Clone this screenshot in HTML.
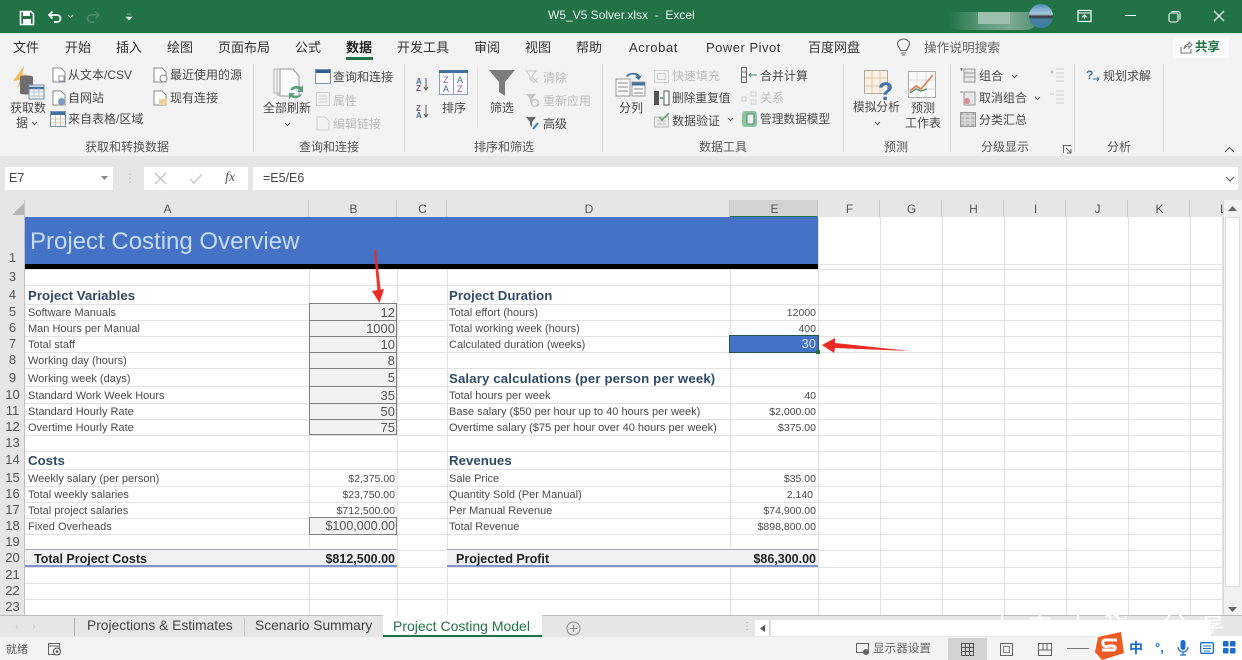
<!DOCTYPE html>
<html><head><meta charset="utf-8"><style>
*{box-sizing:border-box}
html,body{margin:0;padding:0}
body{width:1242px;height:660px;overflow:hidden;position:relative;background:#fff;font-family:"Liberation Sans","Noto Sans CJK SC",sans-serif;color:#444}
.a{position:absolute}
.t{position:absolute;white-space:nowrap;line-height:16px;height:16px}
.rb{font-size:12px;color:#4a4a4a}
.dis{color:#bdbdbd}
.tab{font-size:13px;color:#333;top:40px;line-height:16px}
.gl{font-size:12px;color:#555;top:139px}
.sep{position:absolute;top:64px;width:1px;height:88px;background:#d2d2d2}
.ic{position:absolute}
.h{position:absolute;top:200px;height:17px;font-size:12px;line-height:18px;text-align:center;color:#555;border-right:1px solid #c8c8c8;padding-left:2px}
.r{position:absolute;left:0;width:25px;font-size:13px;line-height:16px;text-align:center;color:#555}
.c{position:absolute;font-size:11px;line-height:16px;color:#4a4a4a;white-space:nowrap;margin-top:1px}
.n{text-align:right;font-size:10.5px}
.hd{font-weight:bold;font-size:13.2px;color:#2f4a68;letter-spacing:.05px}
.in{position:absolute;left:309px;width:88px;background:#f2f2f2;border:1px solid #7f7f7f;font-size:13px;text-align:right;padding-right:1px;color:#555}
.v{position:absolute;top:217px;height:398px;width:1px;background:#e2e2e2}
.ho{position:absolute;left:25px;width:1197px;height:1px;background:#e2e2e2}
.tb{left:0;font-size:13.8px;line-height:18px;height:18px;top:617px;color:#444}
</style></head><body>

<!-- title bar -->
<div class="a" style="left:0;top:0;width:1242px;height:33px;background:#217346"></div>
<svg class="ic" style="left:19px;top:10px" width="16" height="16" viewBox="0 0 16 16"><path d="M1.500 1.500H12L14.500 4V14.500H1.500Z" fill="none" stroke="#fff" stroke-width="1.600"/><rect x="4" y="2" width="7" height="4" fill="#fff"/><rect x="4" y="9" width="8" height="5" fill="#fff"/></svg>
<svg class="ic" style="left:47px;top:9px" width="16" height="16" viewBox="0 0 16 16"><path d="M2.500 6H10A3.500 3.500 0 0 1 10 13H7M5.500 2.500L2 6l3.500 3.500" fill="none" stroke="#fff" stroke-width="1.700"/></svg>
<svg class="ic" style="left:67px;top:14px" width="7" height="5"><path d="M1 1l2.500 2.500L6 1" fill="none" stroke="#cfe3d8" stroke-width="1"/></svg>
<svg class="ic" style="left:85px;top:9px" width="16" height="16" viewBox="0 0 16 16"><path d="M13 6H6A3.500 3.500 0 0 0 6 13H9M10.500 2.500L14 6l-3.500 3.500" fill="none" stroke="#4d8f6c" stroke-width="1.500"/></svg>
<svg class="ic" style="left:125px;top:13px" width="8" height="8"><path d="M2 1h4M1 4h6L4 7z" fill="#e4efe9" stroke="#e4efe9" stroke-width=".6"/></svg>
<div class="t" style="left:548px;top:7px;font-size:12px;color:#f0f6f2">W5_V5 Solver.xlsx&nbsp; -&nbsp; Excel</div>
<div class="a" style="left:948px;top:12px;width:90px;height:18px;background:linear-gradient(90deg,#217346,#5e9c7c 40%,#7ba992 70%,#4f9070);border-radius:0 0 12px 12px"></div>
<div class="a" style="left:978px;top:12px;width:32px;height:12px;background:#9dbfad"></div>
<div class="a" style="left:1029px;top:4px;width:24px;height:24px;border-radius:50%;background:linear-gradient(180deg,#4d8fc0 0,#a9c9d8 42%,#333 52%,#4a7f9e 64%,#3a7fa8 100%)"></div>
<svg class="ic" style="left:1077px;top:9px" width="15" height="14" viewBox="0 0 15 14"><rect x="1" y="1.500" width="13" height="11" fill="none" stroke="#fff" stroke-width="1.200"/><path d="M1 4h13M5 8.500l2.500-2.500 2.500 2.500M7.500 6v4" fill="none" stroke="#fff" stroke-width="1"/></svg>
<div class="a" style="left:1125px;top:15px;width:11px;height:1px;background:#fff"></div>
<svg class="ic" style="left:1168px;top:10px" width="13" height="13"><rect x="1" y="3" width="9" height="9" rx="2" fill="none" stroke="#fff" stroke-width="1.100"/><path d="M3.500 1.500H9.500Q12 1.500 12 4V9.500" fill="none" stroke="#fff" stroke-width="1.100"/></svg>
<svg class="ic" style="left:1213px;top:10px" width="12" height="12"><path d="M1 1l10 10M11 1L1 11" stroke="#fff" stroke-width="1.200"/></svg>

<!-- ribbon -->
<div class="a" style="left:0;top:33px;width:1242px;height:123px;background:#f3f3f3"></div>
<div class="a" style="left:0;top:156px;width:1242px;height:44px;background:#e6e6e6"></div>
<div class="a" style="left:0;top:33px;width:1242px;height:2px;background:#e9f3ee"></div>

<div class="t tab" style="left:13px">文件</div>
<div class="t tab" style="left:65px">开始</div>
<div class="t tab" style="left:116px">插入</div>
<div class="t tab" style="left:167px">绘图</div>
<div class="t tab" style="left:218px">页面布局</div>
<div class="t tab" style="left:295px">公式</div>
<div class="t tab" style="left:346px;font-weight:bold;color:#222">数据</div>
<div class="a" style="left:346px;top:57px;width:27px;height:3px;background:#217346"></div>
<div class="t tab" style="left:397px">开发工具</div>
<div class="t tab" style="left:474px">审阅</div>
<div class="t tab" style="left:525px">视图</div>
<div class="t tab" style="left:576px">帮助</div>
<div class="t tab" style="left:629px;letter-spacing:.6px">Acrobat</div>
<div class="t tab" style="left:706px;letter-spacing:.5px">Power Pivot</div>
<div class="t tab" style="left:808px">百度网盘</div>
<svg class="ic" style="left:896px;top:38px" width="15" height="18" viewBox="0 0 15 18"><path d="M4.500 12.500C4 10 1.500 8.500 1.500 6A6 5 0 0 1 13.500 6C13.500 8.500 11 10 10.500 12.500ZM5 15h5M6 17h3" fill="none" stroke="#666" stroke-width="1.100"/></svg>
<div class="t tab" style="left:924px;color:#666;font-size:12.700px">操作说明搜索</div>
<div class="a" style="left:1173px;top:37px;width:56px;height:21px;background:#fafafa"></div>
<svg class="ic" style="left:1180px;top:41px" width="13" height="13"><path d="M1 6v6h10V8M4 8c0-3 3-5 5-5V1l3 3-3 3V5C7 5 5 6 4 8Z" fill="none" stroke="#777" stroke-width="1"/></svg>
<div class="t" style="left:1195px;top:39px;font-size:12.500px;font-weight:bold;color:#217346">共享</div>

<!-- group 1 -->
<svg class="ic" style="left:12px;top:66px" width="34" height="34" viewBox="0 0 34 34"><path d="M12 0L1 15l7-1-3 9 10-15-5 1z" fill="#f0b95a"/><path d="M8 11c0-2 13-2 13 0V27c0 2-13 2-13 0z" fill="#6d6d6d"/><rect x="17" y="19" width="15" height="14" fill="#f5f5f5" stroke="#6f8aa8"/><path d="M17 22h15" stroke="#41719c" stroke-width="2.500"/><path d="M22 22v11M27 22v11M17 26h15M17 30h15" stroke="#a5b5c5" stroke-width=".7"/></svg>
<div class="t rb" style="left:10px;top:100px">获取数</div>
<div class="t rb" style="left:16px;top:115px">据</div>
<svg class="ic" style="left:31px;top:121px" width="7" height="5"><path d="M1 1l2.500 2.500L6 1" fill="none" stroke="#555"/></svg>
<svg class="ic" style="left:52px;top:67px" width="14" height="16"><path d="M1 1h8l4 4v10H1z" fill="#fff" stroke="#888"/><rect x="7" y="9" width="5" height="5" fill="none" stroke="#99a"/></svg>
<div class="t rb" style="left:68px;top:67px">从文本/CSV</div>
<svg class="ic" style="left:52px;top:90px" width="14" height="16"><path d="M1 1h8l4 4v10H1z" fill="#fff" stroke="#888"/><circle cx="9.500" cy="11.500" r="3.500" fill="#7f9cc0"/></svg>
<div class="t rb" style="left:68px;top:90px">自网站</div>
<svg class="ic" style="left:50px;top:111px" width="16" height="16"><rect x=".5" y=".5" width="15" height="15" fill="#f8f8f8" stroke="#7c93ac"/><path d="M1 2.500h14" stroke="#41719c" stroke-width="3"/><path d="M5.500 4v11M10.500 4v11M1 8h14M1 12h14" stroke="#c9a97a" stroke-width=".6"/></svg>
<div class="t rb" style="left:68px;top:111px">来自表格/区域</div>
<svg class="ic" style="left:153px;top:67px" width="15" height="16"><path d="M1 1h8l4 4v10H1z" fill="#fff" stroke="#888"/><circle cx="10.500" cy="11.500" r="3.500" fill="#fff" stroke="#888"/></svg>
<div class="t rb" style="left:170px;top:67px">最近使用的源</div>
<svg class="ic" style="left:153px;top:90px" width="15" height="16"><path d="M1 1h8l4 4v10H1z" fill="#fff" stroke="#888"/><rect x="6" y="9" width="8" height="6" fill="#eccf9e"/></svg>
<div class="t rb" style="left:170px;top:90px">现有连接</div>
<div class="t gl" style="left:85px">获取和转换数据</div>
<div class="sep" style="left:253px"></div>

<!-- group 2 -->
<svg class="ic" style="left:273px;top:68px" width="32" height="32" viewBox="0 0 32 32"><path d="M1 1h8v24H1zM4 1h8v26H4z" fill="#f5f5f5" stroke="#b5b5b5"/><path d="M7 1h13l6 7v20H7z" fill="#fbfbfb" stroke="#999"/><path d="M17 22a7 6 0 0 1 11-3l2-2v7h-6l2-2a4 4 0 0 0-6 0zM29 26a7 6 0 0 1-11 3l-2 2v-6h6l-2 2a4 4 0 0 0 6 0z" fill="#5aa27c"/></svg>
<div class="t rb" style="left:263px;top:100px">全部刷新</div>
<svg class="ic" style="left:284px;top:122px" width="7" height="5"><path d="M1 1l2.500 2.500L6 1" fill="none" stroke="#555"/></svg>
<svg class="ic" style="left:315px;top:69px" width="16" height="15"><rect x=".5" y=".5" width="15" height="14" fill="#fafafa" stroke="#7c93ac"/><path d="M1 2.500h14" stroke="#2f5e97" stroke-width="3"/></svg>
<div class="t rb" style="left:333px;top:69px">查询和连接</div>
<svg class="ic" style="left:316px;top:92px" width="15" height="15"><rect x=".5" y=".5" width="13" height="13" fill="none" stroke="#ccc"/><path d="M3 4h8M3 7h8M3 10h8" stroke="#ccc"/></svg>
<div class="t rb dis" style="left:333px;top:93px">属性</div>
<svg class="ic" style="left:316px;top:116px" width="15" height="16"><path d="M1 1h8l4 4v9H1z" fill="none" stroke="#ccc"/></svg>
<div class="t rb dis" style="left:333px;top:116px">编辑链接</div>
<div class="t gl" style="left:299px">查询和连接</div>
<div class="sep" style="left:404px"></div>

<!-- group 3 -->
<svg class="ic" style="left:416px;top:76px" width="15" height="42" viewBox="0 0 15 42"><text x="0" y="8" font-size="8" font-weight="bold" fill="#41719c" font-family="Liberation Sans">A</text><text x="0" y="15" font-size="8" font-weight="bold" fill="#7b5a8c" font-family="Liberation Sans">Z</text><path d="M10 2v12M8 11l2 3 2-3" stroke="#555" fill="none"/><text x="0" y="35" font-size="8" font-weight="bold" fill="#7b5a8c" font-family="Liberation Sans">Z</text><text x="0" y="42" font-size="8" font-weight="bold" fill="#41719c" font-family="Liberation Sans">A</text><path d="M10 29v12M8 38l2 3 2-3" stroke="#555" fill="none"/></svg>
<svg class="ic" style="left:439px;top:70px" width="29" height="25" viewBox="0 0 29 25"><rect x=".5" y=".5" width="28" height="24" fill="#fbfbfb" stroke="#8ba0b8"/><path d="M0 1.500h29" stroke="#41719c" stroke-width="3"/><path d="M14.500 3v22" stroke="#8ba0b8"/><text x="4" y="13" font-size="9" fill="#a05a9c" font-family="Liberation Sans">Z</text><text x="4" y="22" font-size="9" fill="#41719c" font-family="Liberation Sans">A</text><text x="18" y="13" font-size="9" fill="#41719c" font-family="Liberation Sans">A</text><text x="18" y="22" font-size="9" fill="#a05a9c" font-family="Liberation Sans">Z</text></svg>
<div class="t rb" style="left:442px;top:100px">排序</div>
<div class="a" style="left:477px;top:68px;width:1px;height:60px;background:#e4e4e4"></div>
<svg class="ic" style="left:488px;top:69px" width="28" height="28"><path d="M1 1h26L17 13v14l-6-4V13z" fill="#7c7c7c"/></svg>
<div class="t rb" style="left:490px;top:100px">筛选</div>
<svg class="ic" style="left:525px;top:70px" width="15" height="15"><path d="M1 1h10L7 6v5L5 9V6zM8 8l5 5M13 8l-5 5" fill="none" stroke="#c5c5c5"/></svg>
<div class="t rb dis" style="left:543px;top:70px">清除</div>
<svg class="ic" style="left:525px;top:93px" width="15" height="15"><path d="M1 1h10L7 6v5L5 9V6z" fill="#c5c5c5"/><circle cx="10" cy="10" r="3.500" fill="none" stroke="#c5c5c5" stroke-width="1.500"/></svg>
<div class="t rb dis" style="left:543px;top:93px">重新应用</div>
<svg class="ic" style="left:525px;top:116px" width="15" height="15"><path d="M1 1h10L7 6v5L5 9V6z" fill="#666"/><path d="M8 13l5-6" stroke="#2f7fc4" stroke-width="2"/></svg>
<div class="t rb" style="left:543px;top:116px">高级</div>
<div class="t gl" style="left:474px">排序和筛选</div>
<div class="sep" style="left:602px"></div>

<!-- group 4 -->
<svg class="ic" style="left:615px;top:69px" width="31" height="29" viewBox="0 0 31 29"><path d="M11 7A8 6 0 0 1 25 7l2-1-3 5-4-3 2-.5A5 4 0 0 0 13 8z" fill="#3f6f9f"/><rect x="1" y="10" width="14" height="17" fill="#fafafa" stroke="#999"/><path d="M3 14h10M3 18h10M3 22h10" stroke="#888"/><rect x="17" y="13" width="13" height="14" fill="#fafafa" stroke="#999"/><path d="M17 15h13" stroke="#41719c" stroke-width="3"/><path d="M19 20h9M19 24h9" stroke="#888"/></svg>
<div class="t rb" style="left:619px;top:100px">分列</div>
<svg class="ic" style="left:654px;top:69px" width="16" height="15"><rect x=".5" y="1.500" width="14" height="12" fill="none" stroke="#d0d0d0"/><rect x="3.500" y="4.500" width="8" height="6" fill="none" stroke="#d0d0d0"/></svg>
<div class="t rb dis" style="left:672px;top:68px">快速填充</div>
<svg class="ic" style="left:653px;top:90px" width="17" height="16"><rect x="1" y="1" width="5" height="14" fill="#555"/><path d="M7 8h3" stroke="#4a8a68" stroke-width="1.500"/><rect x="11" y="1" width="5" height="14" fill="#fff" stroke="#555"/></svg>
<div class="t rb" style="left:672px;top:91px;font-size:11.700px">删除重复值</div>
<svg class="ic" style="left:654px;top:112px" width="16" height="16"><rect x=".5" y="5" width="14" height="10" fill="#eee" stroke="#bbb"/><path d="M3 9h9M3 12h9" stroke="#bbb"/><path d="M5 5l3 3 7-7" fill="none" stroke="#5d9a78" stroke-width="1.500"/></svg>
<div class="t rb" style="left:672px;top:113px">数据验证</div>
<svg class="ic" style="left:727px;top:117px" width="7" height="5"><path d="M1 1l2.500 2.500L6 1" fill="none" stroke="#555"/></svg>
<svg class="ic" style="left:741px;top:67px" width="17" height="16"><rect x=".5" y=".5" width="5" height="15" fill="none" stroke="#666"/><path d="M1 5h4M1 10h4" stroke="#666"/><path d="M16 8H8M10 6L8 8l2 2" fill="none" stroke="#4a8a68"/></svg>
<div class="t rb" style="left:760px;top:68px">合并计算</div>
<svg class="ic" style="left:741px;top:90px" width="17" height="16"><rect x="1" y="7" width="4" height="4" fill="none" stroke="#ccc"/><rect x="10" y="2" width="5" height="4" fill="none" stroke="#ccc"/><rect x="10" y="10" width="5" height="4" fill="none" stroke="#ccc"/></svg>
<div class="t rb dis" style="left:760px;top:90px">关系</div>
<svg class="ic" style="left:742px;top:111px" width="15" height="16"><rect x="0" y="0" width="15" height="16" rx="3" fill="#8ec5a0"/><rect x="5" y="3" width="7" height="10" fill="#f0f0f0" stroke="#4a8a68"/></svg>
<div class="t rb" style="left:760px;top:112px;font-size:11.700px">管理数据模型</div>
<div class="t gl" style="left:699px">数据工具</div>
<div class="sep" style="left:843px"></div>

<!-- group 5 -->
<svg class="ic" style="left:864px;top:70px" width="30" height="30" viewBox="0 0 30 30"><rect x=".5" y=".5" width="23" height="23" fill="#fdf2e4" stroke="#aaa"/><path d="M8 1v22M16 1v22M1 8h22M1 16h22" stroke="#e0c8a8"/><text x="14" y="30" font-size="25" font-weight="bold" fill="#3f6fb0" font-family="Liberation Sans">?</text></svg>
<div class="t rb" style="left:853px;top:100px;font-size:11.700px">模拟分析</div>
<svg class="ic" style="left:874px;top:121px" width="7" height="5"><path d="M1 1l2.500 2.500L6 1" fill="none" stroke="#555"/></svg>
<svg class="ic" style="left:908px;top:71px" width="28" height="27" viewBox="0 0 28 27"><rect x=".5" y=".5" width="27" height="26" fill="#fafafa" stroke="#aaa"/><path d="M9 1v25M18 1v25M1 9h26M1 18h26" stroke="#ddd"/><path d="M2 20l6-5 5 3 12-14" fill="none" stroke="#e2764c" stroke-width="1.600"/><path d="M2 22l6-4 5 2 6-2" fill="none" stroke="#4a8a68" stroke-width="1.300"/></svg>
<div class="t rb" style="left:911px;top:100px">预测</div>
<div class="t rb" style="left:905px;top:115px">工作表</div>
<div class="t gl" style="left:884px">预测</div>
<div class="sep" style="left:950px"></div>

<!-- group 6 -->
<svg class="ic" style="left:960px;top:68px" width="16" height="15"><path d="M0 1h3M1.500 0v3" stroke="#777"/><rect x="4" y="1" width="11" height="13" fill="#e8e8e8" stroke="#999"/><path d="M4 5h11M4 9h11" stroke="#999"/></svg>
<div class="t rb" style="left:979px;top:68px">组合</div>
<svg class="ic" style="left:1011px;top:74px" width="7" height="5"><path d="M1 1l2.500 2.500L6 1" fill="none" stroke="#555"/></svg>
<svg class="ic" style="left:960px;top:90px" width="16" height="16"><path d="M0 2h3" stroke="#777"/><rect x="4" y="2" width="11" height="13" fill="#e8e8e8" stroke="#999"/><circle cx="7" cy="11" r="3" fill="#d9899a"/></svg>
<div class="t rb" style="left:979px;top:90px">取消组合</div>
<svg class="ic" style="left:1034px;top:96px" width="7" height="5"><path d="M1 1l2.500 2.500L6 1" fill="none" stroke="#555"/></svg>
<svg class="ic" style="left:960px;top:112px" width="16" height="15"><rect x=".5" y=".5" width="15" height="14" fill="#bbb" stroke="#999"/><path d="M1 4h14M1 8h14M1 11h14M5 1v13M10 1v13" stroke="#e8e8e8"/></svg>
<div class="t rb" style="left:979px;top:112px">分类汇总</div>
<svg class="ic" style="left:1049px;top:68px" width="15" height="14"><path d="M1 4h4M3 2v4" stroke="#bbb"/><path d="M7 1h8M7 5h8M7 9h8M7 13h8" stroke="#ccc"/></svg>
<svg class="ic" style="left:1049px;top:90px" width="15" height="14"><path d="M1 4h4" stroke="#bbb"/><path d="M7 1h8M7 5h8M7 9h8M7 13h8" stroke="#ccc"/></svg>
<div class="t gl" style="left:981px">分级显示</div>
<svg class="ic" style="left:1063px;top:145px" width="9" height="9"><path d="M.5 8V.5H8M3 3l5 5M8 4v4H4" fill="none" stroke="#666"/></svg>
<div class="sep" style="left:1074px"></div>

<!-- group 7 -->
<svg class="ic" style="left:1086px;top:68px" width="15" height="15"><text x="0" y="11" font-size="12" font-weight="bold" fill="#41719c" font-family="Liberation Sans">?</text><path d="M7 11h6M11 9l2 2-2 2" fill="none" stroke="#41719c"/></svg>
<div class="t rb" style="left:1103px;top:68px">规划求解</div>
<div class="t gl" style="left:1107px">分析</div>
<div class="sep" style="left:1163px"></div>
<svg class="ic" style="left:1224px;top:146px" width="11" height="7"><path d="M1 6l4.500-4.500L10 6" fill="none" stroke="#555" stroke-width="1.100"/></svg>

<!-- formula bar -->
<div class="a" style="left:5px;top:167px;width:108px;height:23px;background:#fff"></div>
<div class="t" style="left:9px;top:170px;font-size:12.500px;color:#444">E7</div>
<svg class="ic" style="left:101px;top:176px" width="7" height="4"><path d="M0 0h7L3.500 4z" fill="#888"/></svg>
<div class="t" style="left:124px;top:170px;font-size:12px;color:#bbb">⋮</div>
<div class="a" style="left:144px;top:167px;width:104px;height:23px;background:#fff"></div>
<svg class="ic" style="left:154px;top:172px" width="13" height="13"><path d="M1 1l11 11M12 1L1 12" stroke="#c4c4c4" stroke-width="1.300"/></svg>
<svg class="ic" style="left:189px;top:172px" width="14" height="13"><path d="M1 7l4 4 8-9" fill="none" stroke="#c4c4c4" stroke-width="1.300"/></svg>
<div class="t" style="left:225px;top:170px;font-family:'Liberation Serif',serif;font-style:italic;font-size:14px;color:#555">fx</div>
<div class="a" style="left:253px;top:167px;width:985px;height:23px;background:#fff"></div>
<div class="t" style="left:263px;top:170px;font-size:12.500px;color:#444">=E5/E6</div>
<svg class="ic" style="left:1225px;top:176px" width="10" height="6"><path d="M1 1l4 4 4-4" fill="none" stroke="#555" stroke-width="1.100"/></svg>

<!-- headers -->
<div class="a" style="left:0;top:200px;width:1224px;height:17px;background:#e6e6e6"></div>
<div class="a" style="left:0;top:200px;width:25px;height:415px;background:#e6e6e6;border-right:1px solid #c0c0c0"></div>
<svg class="ic" style="left:12px;top:203px" width="12" height="12"><path d="M12 0V12H0z" fill="#b5b5b5"/></svg>
<div class="h" style="left:25px;width:284px">A</div>
<div class="h" style="left:309px;width:88px">B</div>
<div class="h" style="left:397px;width:50px">C</div>
<div class="h" style="left:447px;width:283px">D</div>
<div class="h" style="left:730px;width:88px;background:#d2d2d2;border-bottom:1px solid #217346">E</div>
<div class="h" style="left:818px;width:62px">F</div>
<div class="h" style="left:880px;width:62px">G</div>
<div class="h" style="left:942px;width:62px">H</div>
<div class="h" style="left:1004px;width:62px">I</div>
<div class="h" style="left:1066px;width:62px">J</div>
<div class="h" style="left:1128px;width:62px">K</div>
<div class="h" style="left:1190px;width:32px;border-right:0;padding-left:30px">L</div>

<!-- row numbers -->
<div class="r" style="top:250px">1</div>
<div class="r" style="top:269px">3</div><div class="r" style="top:287px">4</div><div class="r" style="top:304px">5</div>
<div class="r" style="top:320px">6</div><div class="r" style="top:336px">7</div><div class="r" style="top:352px">8</div>
<div class="r" style="top:370px">9</div><div class="r" style="top:387px">10</div><div class="r" style="top:403px">11</div>
<div class="r" style="top:419px">12</div><div class="r" style="top:435px">13</div><div class="r" style="top:452px">14</div>
<div class="r" style="top:470px">15</div><div class="r" style="top:486px">16</div><div class="r" style="top:502px">17</div>
<div class="r" style="top:518px">18</div><div class="r" style="top:534px">19</div><div class="r" style="top:550px">20</div>
<div class="r" style="top:567px">21</div><div class="r" style="top:583px">22</div><div class="r" style="top:599px">23</div>

<!-- grid -->
<div class="v" style="left:309px"></div><div class="v" style="left:397px"></div><div class="v" style="left:447px"></div><div class="v" style="left:730px"></div>
<div class="v" style="left:818px"></div><div class="v" style="left:880px"></div><div class="v" style="left:942px"></div><div class="v" style="left:1004px"></div>
<div class="v" style="left:1066px"></div><div class="v" style="left:1128px"></div><div class="v" style="left:1190px"></div><div class="v" style="left:1222px"></div>
<div class="ho" style="top:264px"></div><div class="ho" style="top:269px"></div><div class="ho" style="top:285px"></div><div class="ho" style="top:304px"></div>
<div class="ho" style="top:320px"></div><div class="ho" style="top:336px"></div><div class="ho" style="top:352px"></div><div class="ho" style="top:368px"></div>
<div class="ho" style="top:386px"></div><div class="ho" style="top:403px"></div><div class="ho" style="top:419px"></div><div class="ho" style="top:435px"></div>
<div class="ho" style="top:451px"></div><div class="ho" style="top:469px"></div><div class="ho" style="top:486px"></div><div class="ho" style="top:502px"></div>
<div class="ho" style="top:518px"></div><div class="ho" style="top:534px"></div><div class="ho" style="top:550px"></div><div class="ho" style="top:567px"></div>
<div class="ho" style="top:583px"></div><div class="ho" style="top:599px"></div>

<!-- title band -->
<div class="a" style="left:25px;top:217px;width:793px;height:47px;background:#4472c4"></div>
<div class="a" style="left:25px;top:264px;width:793px;height:5px;background:#000"></div>
<div class="t" style="left:30px;top:226px;height:32px;line-height:32px;font-size:24px;color:#c6dcf5">Project Costing Overview</div>

<!-- left block -->
<div class="c hd" style="left:28px;top:287px">Project Variables</div>
<div class="c" style="left:28px;top:304px">Software Manuals</div>
<div class="c" style="left:28px;top:320px">Man Hours per Manual</div>
<div class="c" style="left:28px;top:336px">Total staff</div>
<div class="c" style="left:28px;top:352px">Working day (hours)</div>
<div class="c" style="left:28px;top:370px">Working week (days)</div>
<div class="c" style="left:28px;top:387px">Standard Work Week Hours</div>
<div class="c" style="left:28px;top:403px">Standard Hourly Rate</div>
<div class="c" style="left:28px;top:419px">Overtime Hourly Rate</div>
<div class="in" style="top:303px;height:18px;line-height:18px">12</div>
<div class="in" style="top:320px;height:17px;line-height:16px">1000</div>
<div class="in" style="top:336px;height:17px;line-height:16px">10</div>
<div class="in" style="top:352px;height:17px;line-height:16px">8</div>
<div class="in" style="top:368px;height:19px;line-height:18px">5</div>
<div class="in" style="top:386px;height:18px;line-height:18px">35</div>
<div class="in" style="top:403px;height:17px;line-height:16px">50</div>
<div class="in" style="top:419px;height:16px;line-height:15px">75</div>

<div class="c hd" style="left:28px;top:452px">Costs</div>
<div class="c" style="left:28px;top:470px">Weekly salary (per person)</div>
<div class="c" style="left:28px;top:486px">Total weekly salaries</div>
<div class="c" style="left:28px;top:502px">Total project salaries</div>
<div class="c" style="left:28px;top:518px">Fixed Overheads</div>
<div class="c n" style="left:309px;width:86px;top:470px">$2,375.00</div>
<div class="c n" style="left:309px;width:86px;top:486px">$23,750.00</div>
<div class="c n" style="left:309px;width:86px;top:502px">$712,500.00</div>
<div class="in" style="top:517px;height:18px;line-height:17px;font-size:12.500px">$100,000.00</div>

<!-- totals -->
<div class="a" style="left:25px;top:549px;width:372px;height:18px;background:#f2f2f2;border-top:1px solid #a5a5b5;border-bottom:2px solid #7f93c8"></div>
<div class="a" style="left:447px;top:549px;width:371px;height:18px;background:#f2f2f2;border-top:1px solid #a5a5b5;border-bottom:2px solid #7f93c8"></div>
<div class="c" style="left:34px;top:550px;font-weight:bold;font-size:12.500px;color:#222">Total Project Costs</div>
<div class="c n" style="left:309px;width:86px;top:550px;font-weight:bold;font-size:12.500px;color:#222">$812,500.00</div>
<div class="c" style="left:456px;top:550px;font-weight:bold;font-size:12.500px;color:#222">Projected Profit</div>
<div class="c n" style="left:730px;width:86px;top:550px;font-weight:bold;font-size:12.500px;color:#222">$86,300.00</div>

<!-- right block -->
<div class="c hd" style="left:449px;top:287px">Project Duration</div>
<div class="c" style="left:449px;top:304px">Total effort (hours)</div>
<div class="c" style="left:449px;top:320px">Total working week (hours)</div>
<div class="c" style="left:449px;top:336px">Calculated duration (weeks)</div>
<div class="c n" style="left:730px;width:86px;top:304px">12000</div>
<div class="c n" style="left:730px;width:86px;top:320px">400</div>
<div class="a" style="left:729px;top:335px;width:90px;height:18px;background:#4472c4;border:1px solid #1f5d3c"></div>
<div class="a" style="left:816px;top:350px;width:4px;height:4px;background:#217346"></div>
<div class="c n" style="left:730px;width:86px;top:336px;font-size:13px;color:#cfe2f7;margin-top:0">30</div>

<div class="c hd" style="left:449px;top:370px;letter-spacing:.15px">Salary calculations (per person per week)</div>
<div class="c" style="left:449px;top:387px">Total hours per week</div>
<div class="c" style="left:449px;top:403px">Base salary ($50 per hour up to 40 hours per week)</div>
<div class="c" style="left:449px;top:419px">Overtime salary ($75 per hour over 40 hours per week)</div>
<div class="c n" style="left:730px;width:86px;top:387px">40</div>
<div class="c n" style="left:730px;width:86px;top:403px">$2,000.00</div>
<div class="c n" style="left:730px;width:86px;top:419px">$375.00</div>

<div class="c hd" style="left:449px;top:452px">Revenues</div>
<div class="c" style="left:449px;top:470px">Sale Price</div>
<div class="c" style="left:449px;top:486px">Quantity Sold (Per Manual)</div>
<div class="c" style="left:449px;top:502px">Per Manual Revenue</div>
<div class="c" style="left:449px;top:518px">Total Revenue</div>
<div class="c n" style="left:730px;width:86px;top:470px">$35.00</div>
<div class="c n" style="left:730px;width:83px;top:486px">2,140</div>
<div class="c n" style="left:730px;width:86px;top:502px">$74,900.00</div>
<div class="c n" style="left:730px;width:86px;top:518px">$898,800.00</div>

<!-- arrows -->
<svg class="ic" style="left:368px;top:250px" width="20" height="54" viewBox="0 0 20 54"><path d="M6 0L9.500 42L13 42L8 0Z" fill="#ee2a24" opacity=".95"/><path d="M4 41L16 39L11.500 53Z" fill="#ee2a24"/></svg>
<svg class="ic" style="left:820px;top:336px" width="92" height="20" viewBox="0 0 92 20"><path d="M2 9L15 2L15 7L90 15L15 12L14 17Z" fill="#ee2a24"/></svg>

<!-- scrollbar -->
<div class="a" style="left:1223px;top:200px;width:19px;height:415px;background:#f1f1f1;border-left:1px solid #d8d8d8"></div>
<div class="a" style="left:1225px;top:217px;width:15px;height:370px;background:#fff;border:1px solid #ddd"></div>
<svg class="ic" style="left:1228px;top:206px" width="9" height="5"><path d="M0 5L4.500 0 9 5z" fill="#666"/></svg>
<svg class="ic" style="left:1228px;top:607px" width="9" height="5"><path d="M0 0h9L4.500 5z" fill="#666"/></svg>

<!-- tabs -->
<div class="a" style="left:0;top:615px;width:1242px;height:22px;background:#e6e6e6;border-top:1px solid #bdbdbd"></div>
<div class="t" style="left:15px;top:619px;font-size:10px;color:#c4c4c4">‹&nbsp;&nbsp;&nbsp;&nbsp;&nbsp;›</div>
<div class="a" style="left:74px;top:618px;width:1px;height:18px;background:#aaa"></div>
<div class="t tb" style="left:87px">Projections &amp; Estimates</div>
<div class="a" style="left:244px;top:618px;width:1px;height:18px;background:#c8c8c8"></div>
<div class="t tb" style="left:255px">Scenario Summary</div>
<div class="a" style="left:383px;top:615px;width:159px;height:22px;background:#fff;border-bottom:2px solid #217346"></div>
<div class="t tb" style="left:393px;color:#217346;font-size:14px">Project Costing Model</div>
<svg class="ic" style="left:566px;top:621px" width="15" height="15"><circle cx="7.500" cy="7.500" r="6.500" fill="none" stroke="#8a8a8a"/><path d="M7.500 4v7M4 7.500h7" stroke="#8a8a8a"/></svg>
<div class="t" style="left:742px;top:619px;font-size:10px;color:#aaa">⋮</div>
<div class="a" style="left:755px;top:620px;width:15px;height:16px;background:#fff;border-right:1px solid #ccc"></div>
<svg class="ic" style="left:760px;top:625px" width="5" height="7"><path d="M5 0V7L0 3.500z" fill="#555"/></svg>
<div class="a" style="left:771px;top:620px;width:440px;height:16px;background:#fff"></div>
<div class="t" style="left:990px;top:611px;font-size:24px;color:#fff;line-height:26px;height:26px;letter-spacing:14px">十大干货 分享</div>

<!-- status -->
<div class="a" style="left:0;top:637px;width:1242px;height:23px;background:#f3f3f3"></div>
<div class="t" style="left:6px;top:642px;font-size:11px;color:#555">就绪</div>
<svg class="ic" style="left:48px;top:643px" width="14" height="13"><rect x=".5" y=".5" width="11" height="11" fill="none" stroke="#666"/><path d="M1 3h10" stroke="#666"/><circle cx="9" cy="8.500" r="3.500" fill="#f3f3f3" stroke="#555"/><circle cx="9" cy="8.500" r="1.300" fill="#555"/></svg>
<svg class="ic" style="left:856px;top:643px" width="15" height="13"><rect x=".5" y=".5" width="12" height="9" fill="none" stroke="#666"/><circle cx="10" cy="9" r="3" fill="#666"/></svg>
<div class="t" style="left:873px;top:641px;font-size:11.600px;color:#666">显示器设置</div>
<div class="a" style="left:948px;top:638px;width:39px;height:22px;background:#d2d2d2"></div>
<svg class="ic" style="left:961px;top:643px" width="13" height="13"><path d="M.5.500h12v12H.5zM4.500 1v11M8.500 1v11M1 4.500h11M1 8.500h11" fill="none" stroke="#555"/></svg>
<svg class="ic" style="left:1000px;top:643px" width="13" height="13"><path d="M.5.500h12v12H.5z" fill="none" stroke="#666"/><path d="M3.500 3.500h6v6h-6z" fill="none" stroke="#888"/></svg>
<svg class="ic" style="left:1038px;top:643px" width="14" height="13"><path d="M.5.500h13v12H.5zM5 1v6M9 1v6M1 7h12" fill="none" stroke="#666"/></svg>
<div class="a" style="left:1067px;top:648px;width:22px;height:1px;background:#777"></div>
<div class="a" style="left:1096px;top:636px;width:146px;height:24px;background:#fff"></div>
<svg class="ic" style="left:1093px;top:632px" width="32" height="28" viewBox="0 0 32 28"><path d="M5 5L28 0L31 21L9 28L2 20Z" fill="#ee5a24"/><path d="M24 8H13Q9 8 10 12T16 14H20Q24 15 21 18H9" fill="none" stroke="#fff" stroke-width="3"/></svg>
<div class="t" style="left:1129px;top:640px;font-size:14px;font-weight:bold;color:#1a6fd0">中</div>
<div class="t" style="left:1155px;top:640px;font-size:13px;font-weight:bold;color:#1a6fd0">°,</div>
<svg class="ic" style="left:1177px;top:640px" width="12" height="16"><rect x="3.500" y="0" width="5" height="10" rx="2.500" fill="#1a6fd0"/><path d="M1 7a5 5 0 0 0 10 0M6 12v3M3 15h6" fill="none" stroke="#1a6fd0" stroke-width="1.200"/></svg>
<svg class="ic" style="left:1200px;top:642px" width="14" height="12"><rect x=".7" y=".7" width="12.600" height="10.600" rx="1" fill="none" stroke="#1a6fd0" stroke-width="1.300"/><path d="M3 4h8M3 6.500h8M4 9h6" stroke="#1a6fd0"/></svg>
<svg class="ic" style="left:1223px;top:641px" width="13" height="13"><rect width="5.500" height="5.500" rx="1" fill="#1a6fd0"/><rect x="7" width="5.500" height="5.500" rx="1" fill="#1a6fd0"/><rect y="7" width="5.500" height="5.500" rx="1" fill="#1a6fd0"/><rect x="7" y="7" width="5.500" height="5.500" rx="1" fill="#1a6fd0"/></svg>
</body></html>
